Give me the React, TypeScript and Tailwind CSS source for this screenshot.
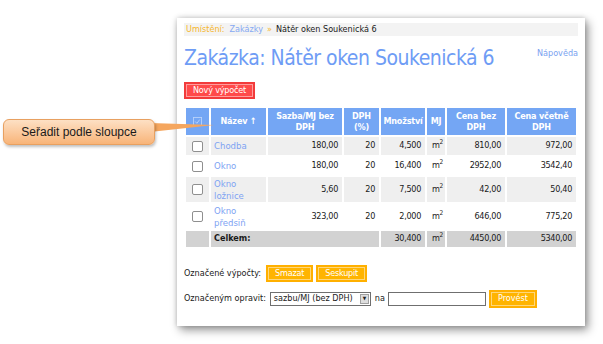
import type { ReactNode } from 'react'

type Row = {
  name: ReactNode
  rate: string
  vat: string
  qty: string
  base: string
  total: string
}

const rows: Row[] = [
  { name: 'Chodba', rate: '180,00', vat: '20', qty: '4,500', base: '810,00', total: '972,00' },
  { name: 'Okno', rate: '180,00', vat: '20', qty: '16,400', base: '2952,00', total: '3542,40' },
  { name: <>Okno<br />ložnice</>, rate: '5,60', vat: '20', qty: '7,500', base: '42,00', total: '50,40' },
  { name: <>Okno<br />předsiň</>, rate: '323,00', vat: '20', qty: '2,000', base: '646,00', total: '775,20' },
]

const font = "font-['DejaVu_Sans_Condensed','DejaVu_Sans',sans-serif]"

function M2() {
  return (
    <span>
      m<span className="relative -top-[4px] text-[6.5px]">2</span>
    </span>
  )
}

function Check() {
  return <span className="mx-auto block h-[11px] w-[11px] rounded-[2px] border border-[#8f8f8f] bg-white" />
}

function SmallButton({ children, red }: { children: ReactNode; red?: boolean }) {
  return (
    <span
      className={`inline-flex h-[17px] items-center border px-[1px] ${
        red ? 'border-[#f23b3b] bg-[#f23b3b]' : 'border-[#ffb000] bg-[#ffb000]'
      }`}
    >
      <span
        className={`flex h-[13px] items-center border px-[6px] text-[9px] tracking-[-0.2px] text-white ${
          red ? 'border-[#ff9d9d] bg-[#ff4a4a]' : 'border-[#ffd77a] bg-[#ffb400]'
        }`}
      >
        {children}
      </span>
    </span>
  )
}

export default function App() {
  const th = 'bg-[#74a6f4] px-[2px] text-center align-middle text-[9px] font-bold leading-[11px] tracking-[-0.2px] text-white'
  const td = 'px-[4px] text-right align-middle text-[9px] tracking-[-0.3px] text-[#1a1a1a]'

  return (
    <div className={`relative h-[344px] w-[603px] overflow-hidden bg-white ${font}`}>
      <div className="pl-[177px] pt-[18px]">
        <div className="h-[308px] w-[408px] bg-white px-[7px] pt-[5px] shadow-[3px_4px_9px_rgba(0,0,0,0.42),0_0_5px_rgba(0,0,0,0.18)]">
          <div className="flex h-[13px] items-center bg-[#f3f3f3] pl-[2px] text-[9px] leading-none">
            <span className="text-[#f6b62c]">Umístění:</span>
            <span className="ml-[5px] text-[#86a9f2]">Zakázky</span>
            <span className="ml-[4px] text-[#f6b62c]">»</span>
            <span className="ml-[4px] text-[#1a1a1a]">Nátěr oken Soukenická 6</span>
          </div>

          <div className="flex h-[46px] items-start justify-between">
            <h1 className="mt-[8px] whitespace-nowrap text-[21px] leading-[28px] tracking-[-0.5px] text-[#6e9cf5]">
              Zakázka: Nátěr oken Soukenická 6
            </h1>
            <span className="mt-[11px] text-[9px] text-[#7aa2f0]">Nápověda</span>
          </div>

          <div className="flex">
            <SmallButton red>Nový výpočet</SmallButton>
          </div>

          <table className="mt-[7px] w-[394px] table-fixed border-separate border-spacing-[2px]">
            <colgroup>
              <col className="w-[23px]" />
              <col className="w-[55px]" />
              <col className="w-[74px]" />
              <col className="w-[35px]" />
              <col className="w-[44px]" />
              <col className="w-[18px]" />
              <col className="w-[58px]" />
              <col className="w-[69px]" />
            </colgroup>
            <thead>
              <tr className="h-[27px]">
                <th className={th}>
                  <svg viewBox="0 0 10 10" className="mx-auto h-[9px] w-[9px]">
                    <rect x="0.5" y="0.5" width="9" height="9" fill="none" stroke="#b9d2fa" />
                    <path d="M2.5 5 L4.3 7 L7.5 2.8" fill="none" stroke="#b9d2fa" strokeWidth="1" />
                  </svg>
                </th>
                <th className={th}>Název ↑</th>
                <th className={th}>Sazba/MJ bez<br />DPH</th>
                <th className={th}>DPH<br />(%)</th>
                <th className={th}>Množství</th>
                <th className={th}>MJ</th>
                <th className={th}>Cena bez<br />DPH</th>
                <th className={th}>Cena včetně<br />DPH</th>
              </tr>
            </thead>
            <tbody>
              {rows.map((row, index) => {
                const bg = index % 2 === 0 ? 'bg-[#efefef]' : 'bg-white'
                const tall = index > 1
                return (
                  <tr key={index} className={tall ? 'h-[25px]' : 'h-[18px]'}>
                    <td className={`${bg} align-middle`}>
                      <Check />
                    </td>
                    <td className={`${bg} px-[3px] align-middle text-[9.5px] leading-[12px] text-[#7ea3f3]`}>{row.name}</td>
                    <td className={`${bg} ${td}`}>{row.rate}</td>
                    <td className={`${bg} ${td}`}>{row.vat}</td>
                    <td className={`${bg} ${td}`}>{row.qty}</td>
                    <td className={`${bg} ${td} !px-[2px] text-left`}>
                      <M2 />
                    </td>
                    <td className={`${bg} ${td}`}>{row.base}</td>
                    <td className={`${bg} ${td}`}>{row.total}</td>
                  </tr>
                )
              })}
              <tr className="h-[16px]">
                <td className="bg-[#d2d2d2]" />
                <td colSpan={3} className="bg-[#d2d2d2] px-[3px] text-[9px] font-bold text-[#1a1a1a]">
                  Celkem:
                </td>
                <td className={`bg-[#d2d2d2] ${td}`}>30,400</td>
                <td className={`bg-[#d2d2d2] ${td} !px-[2px] text-left`}>
                  <M2 />
                </td>
                <td className={`bg-[#d2d2d2] ${td}`}>4450,00</td>
                <td className={`bg-[#d2d2d2] ${td}`}>5340,00</td>
              </tr>
            </tbody>
          </table>

          <div className="mt-[16px] flex items-center gap-[3px] text-[9px] text-[#1a1a1a]">
            <span className="mr-[2px]">Označené výpočty:</span>
            <SmallButton>Smazat</SmallButton>
            <SmallButton>Seskupit</SmallButton>
          </div>

          <div className="mt-[8px] flex h-[18px] items-center whitespace-nowrap text-[9px] text-[#1a1a1a]">
            <span>Označeným opravit:</span>
            <span className="ml-[4px] flex h-[14px] w-[101px] items-center border border-[#6f6f6f] bg-white pl-[3px]">
              <span className="flex-1">sazbu/MJ (bez DPH)</span>
              <span className="mr-[1px] flex h-[10px] w-[9px] items-center justify-center border border-[#a0a0a0] bg-[#dedede] text-[5px] text-[#222]">▼</span>
            </span>
            <span className="ml-[4px]">na</span>
            <span className="ml-[3px] h-[14px] w-[98px] border border-[#6f6f6f] bg-white" />
            <span className="ml-[3px] inline-flex h-[18px] items-center border border-[#ffb000] bg-[#ffb000] px-[1px]">
              <span className="flex h-[14px] items-center border border-[#ffd77a] bg-[#ffb400] px-[6px] text-[9px] text-white">Provést</span>
            </span>
          </div>
        </div>
      </div>

      {/* callout */}
      <svg className="absolute left-0 top-0" width="230" height="160" viewBox="0 0 230 160">
        <polygon points="150,123 150,132 214,125" fill="#f5a65e" />
      </svg>
      <div className="absolute left-[3px] top-[119px] flex h-[26px] w-[152px] items-center justify-center rounded-[6px] border border-[#e8a060] bg-gradient-to-b from-[#fde0c4] to-[#f8b478] font-['Liberation_Sans',sans-serif] text-[12px] text-[#1a1a1a] shadow-[1px_2px_3px_rgba(0,0,0,0.25)]">
        Seřadit podle sloupce
      </div>
    </div>
  )
}
